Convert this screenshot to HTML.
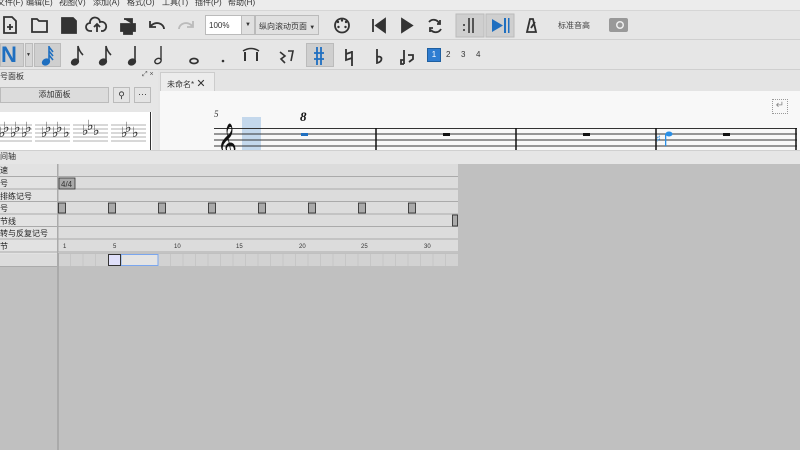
<!DOCTYPE html>
<html><head><meta charset="utf-8"><style>
*{margin:0;padding:0;box-sizing:border-box}
body{width:800px;height:450px;overflow:hidden;background:#c0c0c0;font-family:"Liberation Sans","Noto Sans CJK SC",sans-serif;position:relative;font-size:8px;color:#333}
.a{position:absolute;white-space:nowrap}
.hl{position:absolute;line-height:1}
</style></head><body>
<!-- menu -->
<div class="a" style="left:0;top:0;width:800px;height:10px;background:#ececec"></div>
<div class="a" style="left:0;top:-3px;width:300px;height:12px;font-size:8px;color:#333">
<span class="a" style="left:-3px">文件(F)</span><span class="a" style="left:26px">编辑(E)</span><span class="a" style="left:59px">视图(V)</span><span class="a" style="left:93px">添加(A)</span><span class="a" style="left:127px">格式(O)</span><span class="a" style="left:162px">工具(T)</span><span class="a" style="left:195px">插件(P)</span><span class="a" style="left:228px">帮助(H)</span></div>
<!-- toolbar 1 -->
<div class="a" style="left:0;top:10px;width:800px;height:30px;background:#e6e6e6;border-top:1px solid #d6d6d6;border-bottom:1px solid #d0d0d0"></div>
<svg class="a" style="left:0;top:10px" width="800" height="30">
<g fill="none" stroke="#333" stroke-width="1.8">
<path d="M4 7h8l4 4v12H4z M10 14v6 M7 17h6"/>
<path d="M32 9h5l2 2h8v11H32z"/>
<path d="M62 8h11l3 3v12H62z" fill="#333"/>
<path d="M92 21h-2a4 4 0 0 1 0-8a5 5 0 0 1 10-1a4 4 0 0 1 3 9h-2 M97 22v-7 M94 17l3-3l3 3"/>
<path d="M121 14h14v7h-14z M124 9h8v5 M124 19h8v5h-8z" fill="#333"/>
<path d="M151 16a7 6 0 0 1 13 3 M150 11v6h6"/>
<path d="M192 16a7 6 0 0 0-13 3 M193 11v6h-6" stroke="#bbb"/>
<circle cx="342" cy="15.5" r="7"/>
<path d="M373 9v13 M385 9l-9 6.5l9 6.5z" fill="#333"/>
<path d="M402 9l10 6.5l-10 6.5z" fill="#333"/>
<path d="M429 12a6 6 0 0 1 10 1 M441 19a6 6 0 0 1-10 1 M440 10v4h-3 M430 22v-4h3"/>
<path d="M527 22l3-13h3l3 13z M531 18l4-6"/>
</g>
<circle cx="338" cy="12" r="1.2" fill="#333"/><circle cx="346" cy="12" r="1.2" fill="#333"/><circle cx="342" cy="10.5" r="1.2" fill="#333"/><circle cx="338.5" cy="17" r="1.2" fill="#333"/><circle cx="345.5" cy="17" r="1.2" fill="#333"/>
<rect x="456" y="4" width="28" height="23" fill="#cfcfcf" stroke="#bbb"/>
<rect x="463" y="14" width="2" height="2" fill="#555"/><rect x="463" y="19" width="2" height="2" fill="#555"/><rect x="468" y="8" width="2" height="15" fill="#555"/><rect x="472" y="8" width="2" height="15" fill="#555"/>
<rect x="486" y="4" width="28" height="23" fill="#cfcfcf" stroke="#bbb"/>
<path d="M492 9l11 6.5l-11 6.5z" fill="#1f6fc0"/><rect x="504" y="8" width="2" height="15" fill="#1f6fc0"/><rect x="508" y="8" width="1.5" height="15" fill="#1f6fc0"/>
<rect x="609" y="8" width="19" height="14" rx="2" fill="#999"/><circle cx="620" cy="15" r="4" fill="#eee"/><circle cx="620" cy="15" r="2.5" fill="#999"/>
</svg>
<div class="a" style="left:205px;top:15px;width:50px;height:20px;background:#fff;border:1px solid #bbb;font-size:8px;padding:5px 0 0 3px">100%</div>
<div class="a" style="left:241px;top:15px;width:14px;height:20px;background:#e0e0e0;border:1px solid #bbb;font-size:6px;text-align:center;padding-top:6px">▼</div>
<div class="a" style="left:255px;top:15px;width:64px;height:20px;background:#e0e0e0;border:1px solid #bbb;font-size:8px;padding:5px 0 0 3px">纵向滚动页面 <span style="font-size:6px">▼</span></div>
<div class="a" style="left:558px;top:20px;font-size:8px;color:#444">标准音高</div>
<!-- toolbar 2 -->
<div class="a" style="left:0;top:40px;width:800px;height:30px;background:#e6e6e6;border-bottom:1px solid #cfcfcf"></div>
<div class="a" style="left:0;top:43px;width:24px;height:24px;background:#cfcfcf;border:1px solid #bbb"></div>
<div class="a" style="left:25px;top:43px;width:8px;height:24px;background:#d6d6d6;border:1px solid #bbb;font-size:5px;padding-top:8px">▼</div>
<div class="a" style="left:34px;top:43px;width:27px;height:24px;background:#cfcfcf;border:1px solid #bbb"></div>
<div class="a" style="left:306px;top:43px;width:28px;height:24px;background:#cfcfcf;border:1px solid #bbb"></div>
<div class="hl" style="left:1px;top:44px;font-size:22px;font-weight:bold;color:#1f6fc0">N</div>
<svg class="a" style="left:34px;top:40px" width="120" height="30">
<g fill="#333" stroke="#333" stroke-width="1.6">
<g fill="#1f6fc0" stroke="#1f6fc0"><ellipse cx="12" cy="22" rx="3.5" ry="2.6" transform="rotate(-25 12 22)"/><path d="M15 21V6 M15 7l4 5 M15 11l4 5 M15 15l4 5" fill="none"/></g>
<ellipse cx="41" cy="22" rx="3.5" ry="2.6" transform="rotate(-25 41 22)"/><path d="M44 21V6q1 5 5 9" fill="none"/>
<ellipse cx="69" cy="22" rx="3.5" ry="2.6" transform="rotate(-25 69 22)"/><path d="M72 21V6q1 5 5 9" fill="none"/>
<ellipse cx="98" cy="22" rx="3.5" ry="2.6" transform="rotate(-25 98 22)"/><path d="M101 21V6" fill="none"/>
</g></svg>
<svg class="a" style="left:150px;top:40px" width="320" height="30">
<ellipse cx="8" cy="21" rx="3.3" ry="2.5" fill="none" stroke="#333" stroke-width="1.4" transform="rotate(-25 8 21)"/><path d="M11 20V6" stroke="#333" stroke-width="1.4"/>
<ellipse cx="44" cy="21" rx="4" ry="2.5" fill="none" stroke="#333" stroke-width="1.8"/>
<circle cx="73" cy="21" r="1.3" fill="#333"/>
<path d="M93 11q8-5 16 0" fill="none" stroke="#333" stroke-width="1.6"/><path d="M95 12v9M107 12v9" stroke="#333" stroke-width="2"/>
<path d="M130 12l5 4-4 3 4 4M138 11h5l-2 10" fill="none" stroke="#333" stroke-width="1.6"/>
<path d="M167 7v18M171 7v18M164 13h10M164 19h10" stroke="#1f6fc0" stroke-width="1.8"/>
<path d="M196 9v11l6-2M202 11v15M196 14l6-2" fill="none" stroke="#333" stroke-width="1.8"/>
<path d="M227 9v14c6-1 6-8 0-6" fill="none" stroke="#333" stroke-width="1.8"/>
<path d="M254 10v14M254 24h-3v-4h3M258 15h5v4l-4 3" fill="none" stroke="#333" stroke-width="1.8"/>
</svg>
<div class="a" style="left:427px;top:48px;width:14px;height:14px;background:#2f7dd1;border:1px solid #1f5fa0;color:#fff;font-size:8px;text-align:center;line-height:12px">1</div>
<div class="a" style="left:446px;top:50px;font-size:8px">2</div>
<div class="a" style="left:461px;top:50px;font-size:8px">3</div>
<div class="a" style="left:476px;top:50px;font-size:8px">4</div>
<!-- palette -->
<div class="a" style="left:0;top:70px;width:158px;height:80px;background:#e6e6e6"></div>
<div class="a" style="left:0;top:71px;font-size:8px">号面板</div>
<div class="a" style="left:142px;top:71px;font-size:7px;color:#555">⤢ ×</div>
<div class="a" style="left:0;top:87px;width:109px;height:16px;background:#dcdcdc;border:1px solid #bbb;text-align:center;font-size:8px;line-height:14px">添加面板</div>
<div class="a" style="left:113px;top:87px;width:17px;height:16px;background:#e4e4e4;border:1px solid #bbb;font-size:9px;text-align:center;line-height:14px">⚲</div>
<div class="a" style="left:134px;top:87px;width:17px;height:16px;background:#e4e4e4;border:1px solid #bbb;font-size:9px;text-align:center;line-height:12px">···</div>
<div class="a" style="left:0;top:112px;width:152px;height:38px;background:#fff"></div>
<div class="a" style="left:150px;top:112px;width:1px;height:38px;background:#333"></div>
<svg class="a" style="left:0;top:112px" width="150" height="38">
<g stroke="#999" stroke-width="0.8"><path d="M0 13h32M0 17h32M0 21h32M0 25h32M0 29h32M35 13h35M35 17h35M35 21h35M35 25h35M35 29h35M73 13h35M73 17h35M73 21h35M73 25h35M73 29h35M111 13h35M111 17h35M111 21h35M111 25h35M111 29h35"/></g>
<g font-size="14" font-family="DejaVu Sans" fill="#222"><text x="3" y="20">♭ ♭ ♭</text><text x="-1" y="25">♭ ♭ ♭</text><text x="45" y="20">♭ ♭</text><text x="41" y="25">♭ ♭ ♭</text><text x="87" y="18">♭</text><text x="82" y="23">♭ ♭</text><text x="125" y="20">♭</text><text x="121" y="25">♭ ♭</text></g>
</svg>
<!-- score -->
<div class="a" style="left:158px;top:70px;width:642px;height:80px;background:#e4e4e4"></div>
<div class="a" style="left:160px;top:72px;width:55px;height:19px;background:#ececec;border:1px solid #ccc;border-bottom:none;font-size:8px;padding:4px 0 0 6px">未命名* <span style="font-size:11px">✕</span></div>
<div class="a" style="left:160px;top:91px;width:640px;height:59px;background:#f8f8f8"></div>
<div class="a" style="left:772px;top:99px;width:16px;height:15px;border:1px dotted #999;color:#888;font-size:10px;text-align:center">↵</div>
<div class="a" style="left:242px;top:117px;width:19px;height:33px;background:#c4d8ec"></div>
<svg class="a" style="left:200px;top:100px" width="600" height="50">
<g stroke="#333" stroke-width="1"><path d="M14 28.5h583M14 34h583M14 40h583M14 46h583"/></g>
<g stroke="#111" stroke-width="1.5"><path d="M176 28v22M316 28v22M456 28v22M596 28v22"/></g>
<text x="14" y="17" font-size="9" font-style="italic" font-family="Liberation Serif" fill="#333">5</text>
<text x="17" y="54" font-size="34" font-family="DejaVu Sans" fill="#111">𝄞</text>
<text x="100" y="21" font-size="13" font-weight="bold" font-style="italic" font-family="Liberation Serif" fill="#111">8</text>
<rect x="101" y="33" width="7" height="3" fill="#1f6fc0"/>
<rect x="243" y="33" width="7" height="3" fill="#111"/><rect x="383" y="33" width="7" height="3" fill="#111"/><rect x="523" y="33" width="7" height="3" fill="#111"/>
<g fill="#2a8fe6"><ellipse cx="469" cy="34" rx="3.5" ry="2.5"/><rect x="465" y="34" width="1.3" height="12"/><text x="456" y="42" font-size="10" font-family="DejaVu Sans">♯</text></g>
</svg>
<!-- timeline header -->
<div class="a" style="left:0;top:150px;width:800px;height:14px;background:#e6e6e6;border-top:1px solid #d0d0d0"></div>
<div class="a" style="left:0;top:151px;font-size:8px">间轴</div>
<div class="a" style="left:57px;top:164px;width:2px;height:286px;background:#aaa"></div>
<div class="a" style="left:0;top:164px;width:57px;height:90px;background:#e2e2e2"></div>
<div class="a" style="left:58px;top:164px;width:400px;height:89px;background:#dcdcdc"></div>
<svg class="a" style="left:0;top:164px" width="460" height="104">
<g stroke="#aaa" stroke-width="1"><path d="M0 12.5h458M0 25h458M0 37.5h458M0 50h458M0 62.5h458M0 75h458M0 88h458M58 0V88"/></g>
<g font-size="8" fill="#222" font-family="Liberation Sans,Noto Sans CJK SC"><text x="0" y="9">速</text><text x="0" y="22">号</text><text x="0" y="35">排练记号</text><text x="0" y="47">号</text><text x="0" y="60">节线</text><text x="0" y="72">转与反复记号</text><text x="0" y="85">节</text><text x="0" y="101">ano</text></g>
<rect x="59" y="14" width="16" height="11" fill="#aaa" stroke="#333" stroke-width="0.8"/><text x="61" y="23" font-size="8" fill="#333">4/4</text>
<g fill="#aaa" stroke="#222" stroke-width="0.8"><rect x="58.5" y="39" width="7" height="10"/><rect x="108.5" y="39" width="7" height="10"/><rect x="158.5" y="39" width="7" height="10"/><rect x="208.5" y="39" width="7" height="10"/><rect x="258.5" y="39" width="7" height="10"/><rect x="308.5" y="39" width="7" height="10"/><rect x="358.5" y="39" width="7" height="10"/><rect x="408.5" y="39" width="7" height="10"/><rect x="452.5" y="51" width="5" height="11"/></g>
<g font-size="6" fill="#333"><text x="63" y="84">1</text><text x="113" y="84">5</text><text x="174" y="84">10</text><text x="236" y="84">15</text><text x="299" y="84">20</text><text x="361" y="84">25</text><text x="424" y="84">30</text></g>
<rect x="0" y="90" width="57" height="12" fill="#dcdcdc"/><path d="M0 102.5h57" stroke="#aaa"/>
<rect x="59" y="90" width="399" height="12" fill="#d2d2d2"/>
<g stroke="#c6c6c6"><path d="M70.5 90v12M83 90v12M95.5 90v12M120.5 90v12M133 90v12M145.5 90v12M170.5 90v12M183 90v12M195.5 90v12M208 90v12M220.5 90v12M233 90v12M245.5 90v12M258 90v12M270.5 90v12M283 90v12M295.5 90v12M308 90v12M320.5 90v12M333 90v12M345.5 90v12M358 90v12M370.5 90v12M383 90v12M395.5 90v12M408 90v12M420.5 90v12M433 90v12M445.5 90v12"/></g>
<rect x="121" y="90.5" width="37" height="11" fill="#e4e4e4" stroke="#7aa6ee"/>
<rect x="108.5" y="90.5" width="12" height="11" fill="#e0e0fa" stroke="#333"/>
</svg>
</body></html>
